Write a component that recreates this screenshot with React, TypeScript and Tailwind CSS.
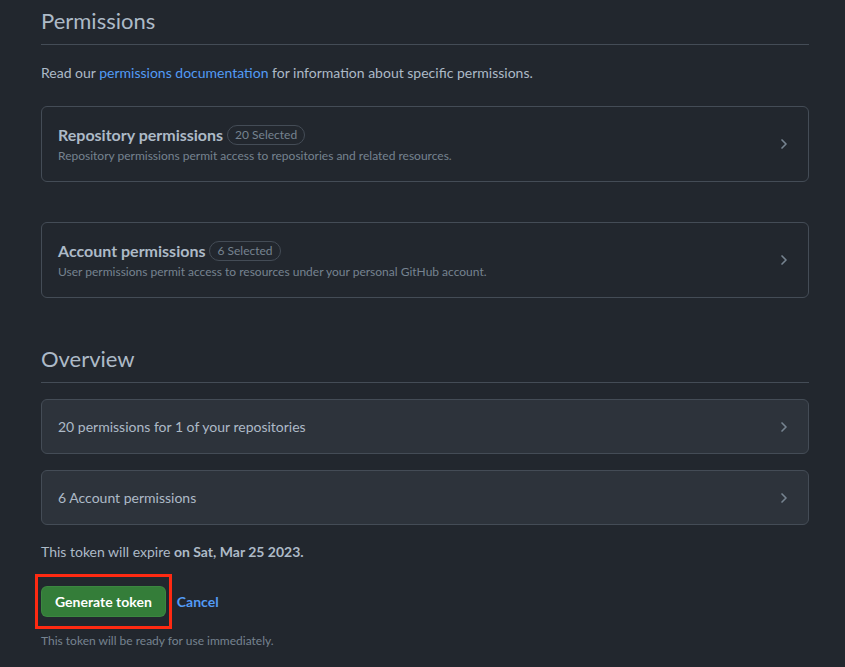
import { ChevronRight } from 'lucide-react';

function PermissionBox({ title, count, desc }: { title: string; count: string; desc: string }) {
  return (
    <div className="flex items-center justify-between rounded-md border border-[#444c56] px-4 py-4">
      <div>
        <div className="flex items-center gap-1">
          <span className="text-base font-bold leading-6 text-[#adbac7]">{title}</span>
          <span className="rounded-full border border-[#444c56] px-[7px] text-xs leading-[18px] text-[#768390]">
            {count}
          </span>
        </div>
        <p className="text-xs leading-[18px] text-[#768390]">{desc}</p>
      </div>
      <ChevronRight className="h-4 w-4 text-[#768390]" strokeWidth={2.5} />
    </div>
  );
}

function OverviewRow({ children }: { children: React.ReactNode }) {
  return (
    <div className="flex items-center justify-between rounded-md border border-[#444c56] bg-[#2d333b] px-4 py-4">
      <span className="text-sm leading-[21px] text-[#adbac7]">{children}</span>
      <ChevronRight className="h-4 w-4 text-[#768390]" strokeWidth={2.5} />
    </div>
  );
}

export default function App() {
  return (
    <div className="min-h-screen bg-[#22272e] font-['Lato','Liberation_Sans',sans-serif]">
      <div className="ml-[41px] w-[768px] pt-[4px]">
        <h2 className="border-b border-[#444c56] pb-[6px] text-[22px] font-normal leading-[34px] text-[#adbac7]">
          Permissions
        </h2>
        <p className="mt-[17px] text-sm leading-[21px] text-[#adbac7]">
          Read our <a className="text-[#539bf5]">permissions documentation</a> for information about specific
          permissions.
        </p>
        <div className="mt-[23px]">
          <PermissionBox
            title="Repository permissions"
            count="20 Selected"
            desc="Repository permissions permit access to repositories and related resources."
          />
        </div>
        <div className="mt-[40px]">
          <PermissionBox
            title="Account permissions"
            count="6 Selected"
            desc="User permissions permit access to resources under your personal GitHub account."
          />
        </div>
        <h2 className="mt-[44px] border-b border-[#444c56] pb-[6px] text-[22px] font-normal leading-[34px] text-[#adbac7]">
          Overview
        </h2>
        <div className="mt-[16px] flex flex-col gap-4">
          <OverviewRow>20 permissions for 1 of your repositories</OverviewRow>
          <OverviewRow>6 Account permissions</OverviewRow>
        </div>
        <p className="mt-[16px] text-sm leading-[21px] text-[#adbac7]">
          This token will expire <span className="font-bold">on Sat, Mar 25 2023.</span>
        </p>
        <div className="mt-[12px] -ml-[6px] flex items-center">
          <div className="border-[3px] border-[#ff2a12] px-[3px] py-[9px]">
            <button className="h-[31px] rounded-md border border-[#46954a]/40 bg-[#347d39] px-[13px] text-sm font-bold text-white">
              Generate token
            </button>
          </div>
          <a className="ml-[5px] text-sm font-bold text-[#539bf5]">Cancel</a>
        </div>
        <p className="mt-[3px] text-xs leading-[18px] text-[#768390]">This token will be ready for use immediately.</p>
      </div>
    </div>
  );
}
